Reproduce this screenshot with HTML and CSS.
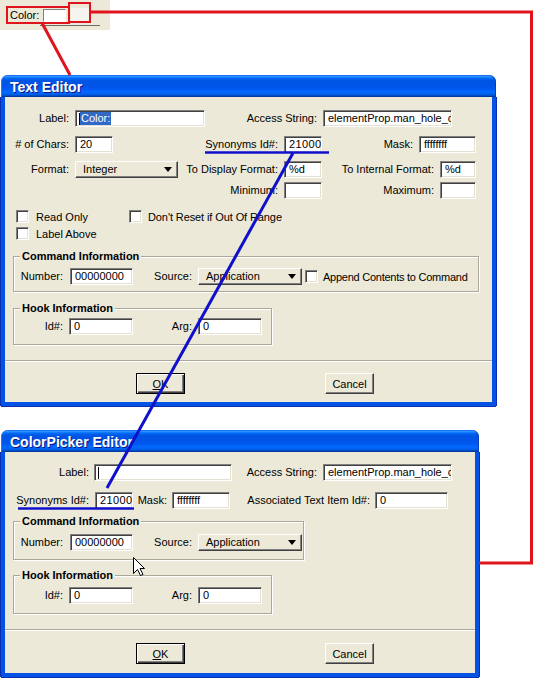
FILE: index.html
```html
<!DOCTYPE html>
<html>
<head>
<meta charset="utf-8">
<title>Text Editor / ColorPicker Editor</title>
<link rel="stylesheet" href="styles.css">
</head>
<body>

<div class="snippet">
  <div class="snip-row">
    <span class="snip-label">Color:</span>
    <span class="snip-box"></span>
    <span class="snip-swatch"></span>
  </div>
  <div class="snip-rule"></div>
</div>

<div class="window win-text">
  <div class="titlebar">Text Editor</div>
  <div class="client te">
    <div class="row r1">
      <span class="lbl w70">Label:</span>
      <div class="edit w130"><span class="caret"></span><span class="sel">Color:</span></div>
      <span class="lbl w118">Access String:</span>
      <div class="edit w129">elementProp.man_hole_c</div>
    </div>
    <div class="row r2">
      <span class="lbl w70"># of Chars:</span>
      <div class="edit w38">20</div>
      <span class="lbl w171">Synonyms Id#:</span>
      <div class="edit w38 wide-num">21000</div>
      <span class="lbl w97">Mask:</span>
      <div class="edit w57">ffffffff</div>
    </div>
    <div class="row r3">
      <span class="lbl w70">Format:</span>
      <div class="combo w103"><span>Integer</span><span class="arrow"></span></div>
      <span class="lbl w106">To Display Format:</span>
      <div class="edit w38">%d</div>
      <span class="lbl w118">To Internal Format:</span>
      <div class="edit w36">%d</div>
    </div>
    <div class="row r4">
      <span class="lbl w279">Minimum:</span>
      <div class="edit w38"></div>
      <span class="lbl w118">Maximum:</span>
      <div class="edit w36"></div>
    </div>
    <div class="chkrow r5">
      <div class="chkitem w113"><span class="check"></span><span class="chktext">Read Only</span></div>
      <div class="chkitem"><span class="check"></span><span class="chktext-b">Don't Reset if Out Of Range</span></div>
    </div>
    <div class="chkrow r6">
      <div class="chkitem"><span class="check"></span><span class="chktext">Label Above</span></div>
    </div>

    <fieldset class="group g-cmd-te">
      <legend>Command Information</legend>
      <div class="row">
        <span class="lbl w56">Number:</span>
        <div class="edit w63">00000000</div>
        <span class="lbl w65">Source:</span>
        <div class="combo w104"><span>Application</span><span class="arrow"></span></div>
        <span class="check append-check"></span>
        <span class="append-text">Append Contents to Command</span>
      </div>
    </fieldset>

    <fieldset class="group g-hook-te">
      <legend>Hook Information</legend>
      <div class="row">
        <span class="lbl w55">Id#:</span>
        <div class="edit w64">0</div>
        <span class="lbl w65">Arg:</span>
        <div class="edit w64">0</div>
      </div>
    </fieldset>

    <div class="separator sep-te"></div>
    <div class="buttons btn-te">
      <div class="btn default"><span><u>O</u>K</span></div>
      <div class="btn cancel">Cancel</div>
    </div>
  </div>
</div>

<div class="window win-color">
  <div class="titlebar">ColorPicker Editor</div>
  <div class="client cp">
    <div class="row c1">
      <span class="lbl w89 pr5">Label:</span>
      <div class="edit w138"><span class="caret"></span></div>
      <span class="lbl w91">Access String:</span>
      <div class="edit w129">elementProp.man_hole_c</div>
    </div>
    <div class="row c2">
      <span class="lbl w90">Synonyms Id#:</span>
      <div class="edit w38 wide-num">21000</div>
      <span class="lbl w39 pr5">Mask:</span>
      <div class="edit w58">ffffffff</div>
      <span class="lbl w145 pr5">Associated Text Item Id#:</span>
      <div class="edit w73">0</div>
    </div>

    <fieldset class="group g-cmd-cp">
      <legend>Command Information</legend>
      <div class="row">
        <span class="lbl w56">Number:</span>
        <div class="edit w63">00000000</div>
        <span class="lbl w65">Source:</span>
        <div class="combo w104"><span>Application</span><span class="arrow"></span></div>
      </div>
    </fieldset>

    <fieldset class="group g-hook-cp">
      <legend>Hook Information</legend>
      <div class="row">
        <span class="lbl w55">Id#:</span>
        <div class="edit w64">0</div>
        <span class="lbl w65">Arg:</span>
        <div class="edit w64">0</div>
      </div>
    </fieldset>

    <div class="separator sep-cp"></div>
    <div class="buttons btn-cp">
      <div class="btn default"><span><u>O</u>K</span></div>
      <div class="btn cancel">Cancel</div>
    </div>
  </div>
</div>

<svg class="annot" width="541" height="681" viewBox="0 0 541 681" xmlns="http://www.w3.org/2000/svg">
  <g fill="none" stroke="#e0141c" stroke-width="2">
    <rect x="7" y="7" width="62" height="16"/>
    <rect x="69" y="3" width="21" height="19"/>
  </g>
  <polyline points="90,12 531.5,12 531.5,563 479,563" fill="none" stroke="#e0141c" stroke-width="3"/>
  <line x1="42" y1="23" x2="70" y2="75" stroke="#e0141c" stroke-width="3"/>
  <line x1="205" y1="152.5" x2="329" y2="152.5" stroke="#1010cc" stroke-width="2.5"/>
  <line x1="293" y1="153" x2="107" y2="488" stroke="#1010cc" stroke-width="3"/>
  <line x1="18" y1="508.5" x2="134" y2="508.5" stroke="#1010cc" stroke-width="2.5"/>
  <path transform="translate(133.5,557.5)" d="M0 0 V16 L4 12 L7 18 L9.5 17 L6.5 11 L11 11 Z" fill="#fff" stroke="#000" stroke-width="1" stroke-linejoin="miter"/>
</svg>

</body>
</html>
```

FILE: styles.css
```css
* { box-sizing: border-box; }

html, body { margin: 0; padding: 0; }

body {
  position: relative;
  width: 541px;
  height: 681px;
  overflow: hidden;
  background: #fff;
  font-family: "Liberation Sans", Arial, sans-serif;
  font-size: 11px;
  color: #000;
}

/* ---------- cropped snippet top-left ---------- */
.snippet {
  position: absolute;
  left: 0;
  top: 0;
  width: 110px;
  height: 30px;
  background: #ece9d8;
  display: flex;
  flex-direction: column;
}
.snip-row {
  display: flex;
  align-items: center;
  height: 18px;
  margin-top: 6px;
  padding-left: 10px;
}
.snip-label { width: 33px; line-height: 18px; }
.snip-box {
  width: 23px;
  height: 13px;
  background: #fff;
  border: 1px solid;
  border-color: #808080 #fff #fff #808080;
}
.snip-swatch {
  margin-left: 5px;
  width: 18px;
  height: 15px;
  background: #f5f4ef;
}
.snip-rule {
  margin-left: 40px;
  margin-top: 1px;
  width: 60px;
  height: 1px;
  background: #6b6b6b;
}

/* ---------- windows ---------- */
.window {
  position: absolute;
  display: flex;
  flex-direction: column;
}
.win-text { left: 1px; top: 75px; width: 495px; }
.win-color { left: 1px; top: 430px; width: 478px; }

.titlebar {
  height: 22px;
  padding: 3px 0 0 9px;
  line-height: 19px;
  border-radius: 7px 7px 0 0;
  color: #fff;
  font-family: "Liberation Sans", Arial, sans-serif;
  font-weight: bold;
  font-size: 14px;
  text-shadow: 1px 1px #0a1883;
  background: linear-gradient(to bottom,
    #0058ee 0%, #3593ff 5%, #288eff 8%, #127dff 11%, #036ffc 14%,
    #0262ee 18%, #0057e5 24%, #0054e3 30%, #0055eb 56%, #005bf5 66%,
    #026afe 76%, #0062ef 86%, #0052d6 92%, #0040ab 96%, #003092 100%);
  box-shadow: inset 1px 0 #2a78f0, inset -1px 0 #0a3cc0;
}

.client {
  background: #ece9d8;
  border: 4px solid #0553e4;
  border-top: 0;
  box-shadow: -1px 0 #0a2fb0, 1px 0 #0a2fb0, 0 1px #0a2fb0;
  display: flex;
  flex-direction: column;
}
.win-text .client { height: 309px; }
.win-color .client { height: 225px; }

/* ---------- rows ---------- */
.row {
  display: flex;
  align-items: center;
  height: 17px;
  flex: none;
}
.r1 { margin-top: 13px; }
.r2 { margin-top: 9px; }
.r3 { margin-top: 8px; }
.r4 { margin-top: 4px; }
.c1 { margin-top: 12px; }
.c2 { margin-top: 11px; }

.lbl {
  flex: none;
  text-align: right;
  padding-right: 6px;
  white-space: nowrap;
  line-height: 17px;
}
.lbl.pr5 { padding-right: 5px; }
.w36 { width: 36px; }
.w38 { width: 38px; }
.w39 { width: 39px; }
.w55 { width: 55px; }
.w56 { width: 56px; padding-right: 7px; }
.w57 { width: 57px; }
.w58 { width: 58px; }
.w63 { width: 63px; }
.w64 { width: 64px; }
.w65 { width: 65px; }
.w70 { width: 70px; }
.w73 { width: 73px; }
.w89 { width: 89px; }
.w90 { width: 90px; }
.w91 { width: 91px; }
.w97 { width: 97px; }
.w103 { width: 103px; }
.w104 { width: 104px; }
.w106 { width: 106px; }
.w113 { width: 113px; }
.w118 { width: 118px; }
.w129 { width: 129px; }
.w130 { width: 130px; }
.w138 { width: 138px; }
.w145 { width: 145px; }
.w171 { width: 171px; }
.w279 { width: 279px; }

/* sunken edit box */
.edit {
  flex: none;
  height: 17px;
  display: flex;
  align-items: center;
  padding-left: 4px;
  background: #fff;
  border: 1px solid;
  border-color: #808080 #fff #fff #808080;
  box-shadow: inset 1px 1px #404040, inset -1px -1px #e4e1d4;
  white-space: nowrap;
  overflow: hidden;
  line-height: 15px;
}
.edit.wide-num { letter-spacing: 0.4px; }
.caret {
  display: inline-block;
  width: 1px;
  height: 12px;
  margin-left: -1px;
  background: #000;
  flex: none;
}
.sel {
  display: inline-block;
  line-height: 13px;
  padding: 0 1px;
  background: #316ac5;
  color: #fff;
}

/* raised combo */
.combo {
  flex: none;
  height: 17px;
  display: flex;
  align-items: center;
  padding-left: 7px;
  background: #ece9d8;
  border: 1px solid;
  border-color: #fff #404040 #404040 #fff;
  box-shadow: inset -1px -1px #808080;
  white-space: nowrap;
  line-height: 15px;
}
.arrow {
  margin-left: auto;
  margin-right: 5px;
  width: 0;
  height: 0;
  border-left: 4px solid transparent;
  border-right: 4px solid transparent;
  border-top: 5px solid #000;
}

/* checkboxes */
.chkrow {
  display: flex;
  align-items: center;
  height: 13px;
  padding-left: 11px;
  flex: none;
}
.r5 { margin-top: 11px; }
.r6 { margin-top: 4px; }
.chkitem {
  display: flex;
  align-items: center;
  flex: none;
}
.check {
  flex: none;
  display: inline-block;
  width: 13px;
  height: 13px;
  background: #fff;
  border: 1px solid;
  border-color: #808080 #fff #fff #808080;
  box-shadow: inset 1px 1px #404040, inset -1px -1px #e4e1d4;
}
.chktext { margin-left: 7px; white-space: nowrap; }
.chktext-b { margin-left: 6px; white-space: nowrap; letter-spacing: -0.1px; }
.append-check { margin-left: 3px; }
.append-text { margin-left: 5px; white-space: nowrap; letter-spacing: -0.25px; }

/* group boxes */
.group {
  flex: none;
  margin: 0 0 0 8px;
  padding: 0;
  min-width: 0;
  border: 1px solid #aca899;
  box-shadow: 1px 1px 0 #fff, inset 1px 1px 0 #fff;
}
.group legend {
  margin-left: 6px;
  padding: 0 2px;
  font-weight: bold;
  font-size: 11px;
  line-height: 13px;
  background: #ece9d8;
}
.g-cmd-te { width: 466px; margin-top: 10px; padding: 5px 0 6px 0; }
.g-hook-te { width: 259px; margin-top: 10px; padding: 3px 0 9px 0; }
.g-cmd-cp { width: 291px; margin-top: 6px; padding: 6px 0 8px 0; }
.g-hook-cp { width: 259px; margin-top: 9px; padding: 5px 0 9px 0; }

/* separator + buttons */
.separator {
  flex: none;
  height: 2px;
  border-top: 1px solid #aca899;
  border-bottom: 1px solid #fff;
}
.sep-te { margin-top: 15px; }
.sep-cp { margin-top: 15px; }

.buttons {
  display: flex;
  flex: none;
  padding-left: 131px;
}
.btn-te { margin-top: 11px; }
.btn-cp { margin-top: 12px; }

.btn {
  flex: none;
  width: 49px;
  height: 21px;
  display: flex;
  align-items: center;
  justify-content: center;
  background: #ece9d8;
  border: 1px solid;
  border-color: #fff #404040 #404040 #fff;
  box-shadow: inset -1px -1px #808080;
}
.btn.default {
  border-color: #000;
  box-shadow: inset 1px 1px #fff, inset -1px -1px #404040, inset -2px -2px #808080;
}
.btn.cancel { margin-left: 140px; }

/* annotations overlay */
.annot {
  position: absolute;
  left: 0;
  top: 0;
  pointer-events: none;
}
```
